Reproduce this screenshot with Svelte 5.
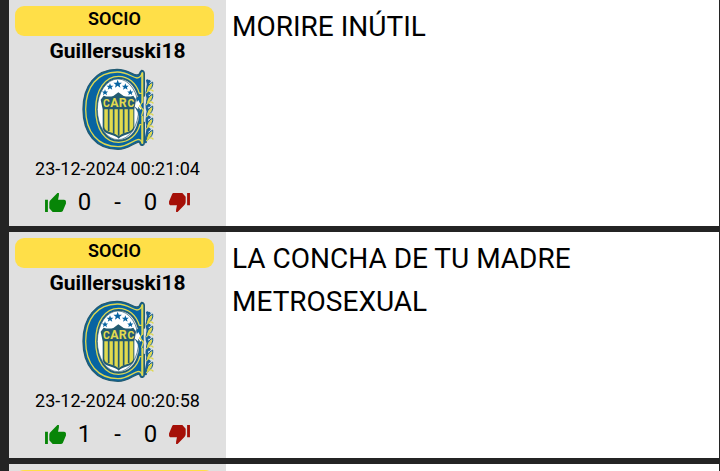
<script>
  const posts = [
    { id: 1, role: 'SOCIO', user: 'Guillersuski18', date: '23-12-2024 00:21:04', up: 0, down: 0, message: 'MORIRE INÚTIL' },
    { id: 2, role: 'SOCIO', user: 'Guillersuski18', date: '23-12-2024 00:20:58', up: 1, down: 0, message: 'LA CONCHA DE TU MADRE METROSEXUAL' }
  ];
  const star = '0,-12 3,-4 11,-4 5,1 7,9 0,4 -7,9 -5,1 -11,-4 -3,-4';
  const stars = [
    [128, 67, 1.15], [105, 75, 0.95], [151, 75, 0.95], [90, 92, 0.85], [166, 92, 0.85]
  ];
  const leaves = [74, 110, 146, 182, 218];
</script>

{#snippet crest()}
  <svg class="crest" viewBox="18 18 219 249" role="img" aria-label="CARC">
    <g stroke-linejoin="round" stroke-linecap="round">
      <path d="M217 56C225 70 213 82 216 98C224 112 213 122 216 138C224 154 213 164 216 182C224 198 214 212 212 240" fill="none" stroke="#176097" stroke-width="8" />
      {#each leaves as y}
        <g transform={`translate(220 ${y})`}>
          <path d="M-6 18Q-6 -4 13 -14Q17 4 -6 18Z" fill="#ded750" stroke="#176097" stroke-width="3" />
          <path d="M-5 18Q6 4 14 13" fill="none" stroke="#ded750" stroke-width="4" />
          <circle cx="2" cy="-16" r="5" fill="#176097" />
          <circle cx="9" cy="-18" r="2" fill="#b8d9e8" />
        </g>
      {/each}
      <path d="M126 22C62 22 24 72 24 142C24 214 63 262 129 262C159 262 171 246 188 241Q194 239 196 247Q198 251 203 250Q208 249 208 242V181L190 180C184 212 162 236 131 236C94 236 67 199 67 142C67 86 94 49 131 49C160 49 180 70 190 102H208V34Q207 25 200 25Q196 27 193 36C181 49 166 22 126 22Z" fill="#0764a2" stroke="#235b71" stroke-width="4" />
      <path d="M127 30C67 30 32 75 32 142C32 210 69 254 129 254C157 254 172 236 190 232Q197 232 202 243V187H195C187 219 161 241 131 241C90 241 62 202 62 142C62 82 91 43 131 43C160 43 184 64 193 94H202V33Q196 48 186 48C170 46 158 30 127 30Z" fill="#0764a2" stroke="#ded750" stroke-width="4" />
      <ellipse cx="129" cy="142" rx="62" ry="91" fill="#fff" stroke="#235b71" stroke-width="2" />
      <path d="M184 108L205 94V188L190 182Q195 161 189 150L181 136L195 148L188 125Z" fill="#0764a2" stroke="#235b71" stroke-width="2" />
      <path d="M190 114L182 126L198 144L199 132Z" fill="#fff" />
      <path d="M202 34V120M202 164V243" stroke="#ded750" stroke-width="6" />
      <path d="M202 120L194 132L205 144L200 160" fill="none" stroke="#ded750" stroke-width="4" />
      {#each stars as [x, y, size]}
        <polygon points={star} transform={`translate(${x} ${y}) scale(${size})`} fill="#0764a2" />
      {/each}
      <path d="M130 91L146 102Q162 106 175 101L183 113L178 142V196Q176 211 157 217Q139 222 131 230Q123 222 104 217Q85 212 83 198V142L77 113L86 101Q101 106 115 102Z" fill="#235b71" />
      <path d="M88 142H175V195Q173 206 155 211Q138 216 131 223Q123 216 106 211Q89 206 88 195Z" fill="#e2db4e" />
      <path d="M101 140V207M116 140V215M146 140V215M161 140V207M131 140V221" fill="none" stroke="#235b71" stroke-width="5" stroke-linecap="butt" />
      <g class="letters"><text x="94" y="135" font-size="31">C</text><text x="118" y="134" font-size="37">A</text><text x="143" y="134" font-size="37">R</text><text x="168" y="135" font-size="31">C</text></g>
    </g>
  </svg>
{/snippet}

{#snippet thumb(down)}
  <svg class="thumb" class:down viewBox="1 1 22 20" aria-hidden="true">
    <path fill="currentColor" d="M1 21h3V8H1v13zM23 10c0-1.100-.9-2-2-2h-6.300l.9-4.600V1H14L7.600 7.600C6 9 5.500 10 5.500 12v5L9 21h9c.8 0 1.500-.5 1.800-1.200l3-7.100c.1-.2.2-.5.2-.7z" />
  </svg>
{/snippet}

<main>
  {#each posts as post (post.id)}
    <article>
      <aside>
        <div class="role">{post.role}</div>
        <strong>{post.user}</strong>
        {@render crest()}
        <time>{post.date}</time>
        <div class="votes">
          <button class="like" aria-label="Me gusta">{@render thumb(false)}</button>
          <span>{post.up}</span>
          <span class="dash">-</span>
          <span>{post.down}</span>
          <button class="dislike" aria-label="No me gusta">{@render thumb(true)}</button>
        </div>
      </aside>
      <p>{post.message}</p>
    </article>
  {/each}
  <article>
    <aside><div class="role">&nbsp;</div></aside>
    <p></p>
  </article>
</main>

<style>
  :global(body) {
    margin: 0;
    background: #242424;
  }
  main {
    box-sizing: border-box;
    height: 100vh;
    overflow: hidden;
    display: flex;
    flex-direction: column;
    gap: 6px;
    padding: 0 1px 0 9px;
    font-family: Roboto, sans-serif;
    color: #000;
  }
  article {
    flex-shrink: 0;
    display: flex;
    background: #fff;
  }
  aside {
    box-sizing: border-box;
    flex: 0 0 217px;
    display: flex;
    flex-direction: column;
    align-items: center;
    padding: 6px 0;
    background: #e0e0e0;
  }
  .role {
    align-self: stretch;
    margin: 0 12px 0 6px;
    border-radius: 9px;
    background: #ffdf48;
    font-size: 18px;
    font-weight: 600;
    line-height: 26px;
    padding-bottom: 4px;
    text-align: center;
  }
  strong {
    font-size: 21px;
    font-weight: 700;
    line-height: 30px;
  }
  .crest {
    width: 73px;
    height: 83px;
    margin-top: 2px;
  }
  .letters {
    font-family: Roboto, sans-serif;
    font-weight: 700;
    text-anchor: middle;
    fill: #e2db4e;
  }
  time {
    margin-top: 3px;
    font-size: 18px;
    line-height: 30px;
  }
  .votes {
    display: flex;
    align-items: center;
    font-size: 24px;
    line-height: 36px;
  }
  .dash {
    margin: 0 23px;
  }
  button {
    display: flex;
    padding: 0;
    border: 0;
    background: none;
    cursor: pointer;
  }
  .like {
    margin-right: 12px;
    color: #078507;
  }
  .dislike {
    margin-left: 12px;
    color: #a51008;
  }
  .thumb {
    width: 21px;
    height: 19px;
  }
  .down {
    transform: rotate(180deg);
  }
  p {
    flex: 1;
    margin: 0;
    padding: 5px 6px;
    max-width: 400px;
    font-size: 28px;
    line-height: 43px;
  }
</style>
